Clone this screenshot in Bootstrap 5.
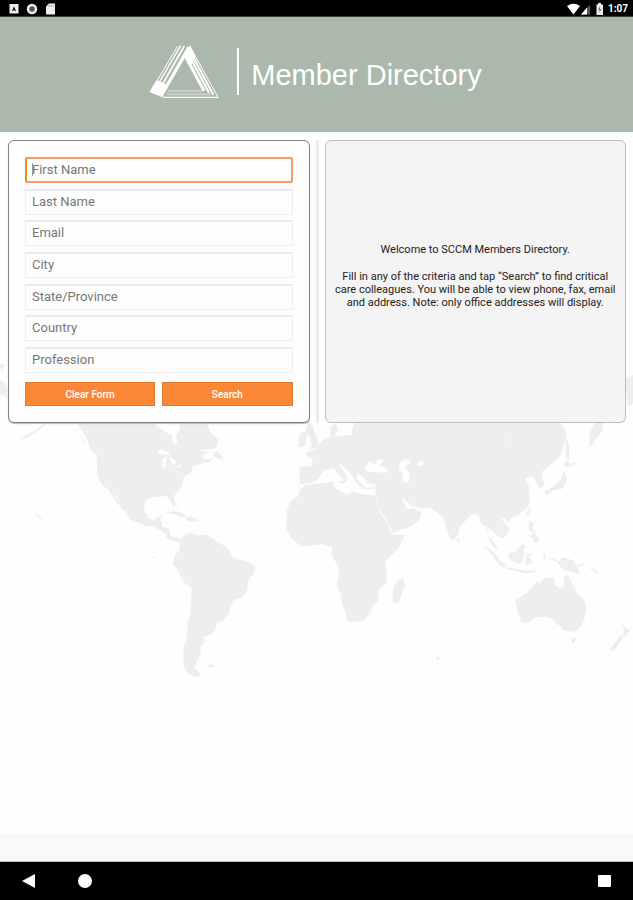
<!DOCTYPE html>
<html lang="en">
<head>
<meta charset="utf-8">
<meta name="viewport" content="width=device-width, initial-scale=1">
<title>Member Directory</title>
<link href="https://cdn.jsdelivr.net/npm/bootstrap@5.3.0/dist/css/bootstrap.min.css" rel="stylesheet">
<style>
body { font-family: Roboto, "Liberation Sans", sans-serif; background: #fefefe; color: #222; }
.status-bar { height: 17px; padding: 2px 5px 0 8px; font-size: 10px; line-height: 14px; background: #000; border-bottom: 1px solid #39423b; }
.brand-bar { min-height: 115px; background: #abb8ac; padding: 0 2px 6px 0; }
.brand-rule { width: 2px; height: 47px; background: #fff; margin: 0 12px 0 18px; }
.brand-title { font: 29px/34px "Liberation Sans", Arial, sans-serif; padding-top: 6px; }
.stage { display: grid; align-items: start; }
.stage > * { grid-area: 1 / 1; min-width: 0; }
.map-art { width: 100%; height: auto; fill: #eeeeee; }
.panels { display: grid; grid-template-columns: 1fr 3px 1fr; padding: 8px 7px 8px 8px; gap: 6px; z-index: 1; }
.panel { min-width: 0; border-radius: 6px; min-height: 283px; }
.form-panel { background: #fefefe; border: 1px solid #808080; padding: 16px; box-shadow: 0 1px 1px #bbb; }
.info-panel { background: #f4f4f4; border: 1px solid #bdbdbd; padding: 0 6px 12px; font-size: 11px; line-height: 13px; }
.info-panel p { margin-bottom: 14px; }
.info-panel p:last-child { margin-bottom: 0; }
.divider { background: #ecebeb; }
.fields { min-height: 216px; margin-bottom: 9px; }
.field { height: 26px; padding: 0 6px 2px; font-size: 13px; line-height: 20px; border: 1px solid #eee; border-top: 2px solid #ebebeb; border-radius: 0; background-color: #fefefe; box-shadow: none; }
.field::placeholder { color: #777; opacity: 1; }
.field.active { border: 2px solid #fb9c62; border-left-color: #f08a1d; border-radius: 2px; padding: 0 5px 2px; background: linear-gradient(#999, #999) 5px 4px / 1px 13px no-repeat #fefefe; }
.action { height: 24px; padding: 1px 0 0; font-size: 10px; font-weight: 500; line-height: 21px; color: #fff; background: #fb8736; border: 1px solid #e47a2b; border-radius: 0; }
.actions { gap: 7px; }
.tab-strip { height: 28px; background: #f8f8f8; border-bottom: 1px solid #bbb; }
.sys-nav { height: 38px; background: #000; padding: 0 18px; }
.sys-nav button { background: none; border: 0; padding: 0; line-height: 0; width: 20px; height: 20px; }
.sys-nav svg { fill: #fff; }
.home-key { margin-left: 37px; }
</style>
<script src="https://cdn.jsdelivr.net/npm/bootstrap@5.3.0/dist/js/bootstrap.bundle.min.js"></script>
</head>
<body class="d-flex flex-column min-vh-100">
<div class="status-bar d-flex justify-content-between align-items-center text-white">
  <svg width="48" height="13" viewBox="8 3 48 13" fill="#eee" aria-hidden="true">
    <path fill-rule="evenodd" d="M9.500 4h9v9.500h-9zM12 11h1l1-1.500 1 1.500h1L14 6.500z"/>
    <circle cx="32" cy="9" r="4" fill="#555" stroke="#eee" stroke-width="2.500"/>
    <path d="M49 3.500h6v11h-9V6.500z"/><path d="M49 5v2M51 5v2M53 5v2" stroke="#888" stroke-width=".7"/>
  </svg>
  <div class="d-flex align-items-center gap-1">
    <svg width="37" height="13" viewBox="567 3 37 13" fill="#fff" aria-hidden="true">
      <path d="M567 6q6.500-4.500 13 0l-6.500 8.500z"/>
      <path d="M581 14.500l9-10v10z" fill="#555"/><path d="M581 14.500l6-7v7z"/>
      <path d="M598 3h3v1.500h2v10.500h-6.500V4.500h1.500z" fill="#eee"/><path d="M600 6l-2 4h1.500v3l2-4H600z" fill="#777"/>
    </svg>
    <span class="fw-bold">1:07</span>
  </div>
</div>

<header class="brand-bar d-flex justify-content-center align-items-center text-white">
  <svg width="70" height="54" viewBox="27 27 210 162" role="img" aria-label="SCCM">
    <path d="M28 168L50 132l32 14-14 38z" fill="#fff"/>
    <path d="M150 28l18 34-14 24-22-22z" fill="#fff"/>
    <g stroke="#fff" fill="none">
      <path d="M43 148L113 30" stroke-width="3"/>
      <path d="M50 152L122 29" stroke-width="4"/>
      <path d="M60 158L133 30" stroke-width="5"/>
      <path d="M70 168L147 34" stroke-width="10"/>
      <path d="M149 30L233 182" stroke-width="3"/>
      <path d="M150 45L220 176" stroke-width="6"/>
      <path d="M144 52L207 170" stroke-width="6"/>
      <path d="M136 60L192 164" stroke-width="9"/>
    </g>
    <path d="M70 184h166" stroke="#fff" stroke-width="4"/>
    <path d="M80 175h134M84 165h106" stroke="#fff" stroke-width="6" opacity=".35"/>
  </svg>
  <span class="brand-rule"></span>
  <h1 class="brand-title mb-0">Member Directory</h1>
</header>

<main class="stage flex-grow-1">
  <svg class="map-art" viewBox="0 132 633 570" aria-hidden="true">
    <g transform="translate(0 360) scale(.3333)">
      <path d="M0 60l15 8 7 20v30L10 104 0 107zM0 12h12v14H0z"/>
      <path d="M228 185L246 212 262 240 275 275 290 282 292 345 305 372 330 395 345 420 370 452 375 452 350 415 340 400 350 408 368 440 390 478 440 498 455 497 495 520 500 535 530 546 540 548 540 535 512 530 507 505 488 500 482 480 488 462 462 480 445 475 433 455 434 425 450 412 500 408 512 420 520 440 526 440 522 408 545 380 552 350 575 335 578 318 600 312 632 305 640 290 630 299 610 298 608 283 630 276 594 272 650 265 655 240 630 215 620 185H540L538 210 528 228 532 250 520 252 515 225 495 215 480 205 458 190z"/>
      <path d="M645 293l24 4-3-10-16-14-12 12zM52 244l32-21 22-10 18-18 18-7-17 15-21 17-22 12zM245 227l14 25-5-3-10-16zM500 461l18-8 28 5 16 14-20-1-20-9zM558 474l16-5 25 14-36 2zM535 446l-10-14 12 9zM104 457l12 8 15 20-14-12zM625 914l20 1-8 6-12-1zM456 590h10v3h-10z"/>
      <path d="M540 548L545 535 565 520 575 518 585 526 622 524 635 535 658 550 680 560 692 585 710 598 745 605 765 620 763 638 745 660 742 690 730 708 700 722 692 735 688 760 665 785 650 788 645 812 628 825 612 830 615 845 602 862 602 885 590 905 585 925 605 945 585 952 565 940 550 918 550 865 560 840 563 795 570 765 575 685 550 665 530 625 518 612 526 585 538 570z"/>
      <g fill="#fefefe"><path d="M469 280l13-13 20 8 9 10-9 1-15-2zM487 322v-24l15-13-4 20-3 20zM505 291l14 6 11 9-8 7-6 1-3-13zM522 321l17-5 8-6-8 12z"/></g>
    </g>
    <g transform="translate(270 420) scale(.3333)">
      <path d="M105 195L190 185 195 205 232 225 245 215 275 222 315 225 318 245 335 285 355 318 366 345 405 345 385 385 345 425 350 450 352 485 325 510 325 540 308 560 300 580 278 603 232 606 228 580 215 550 212 520 200 500 208 460 205 440 185 405 187 382 178 382 160 372 95 380 65 355 48 330 50 270 65 240 82 230 90 212z"/>
      <path d="M90 192L88 142 125 138 128 118 108 105 112 95 140 85 160 60 175 50 245 45 248 20 255 5H870L890 40 885 60 878 90 865 115 830 145 820 150 815 165 822 195 812 208 800 190 795 175 783 168 765 175 770 190 778 200 780 250 765 270 735 290 710 290 695 298 717 325 715 340 700 355 685 350 665 330 655 325 655 345 678 375 685 395 668 378 655 350 650 320 635 312 625 285 605 282 570 320 565 345 545 362 530 330 520 292 505 280 485 265 452 265 425 258 400 235 395 238 412 268 430 264 455 280 448 300 420 320 370 338 345 295 320 248 328 195 290 190 280 170 262 160 260 175 272 188 288 204 312 202 312 208 280 207 262 192 245 165 215 135 205 128 232 170 232 182 222 192 195 183 222 182 190 145 165 150 140 180 120 190z"/>
      <path d="M316 190h14v50h-14z"/>
      <path d="M88 45l12-11 10 9-3 33-22 7zM114 0l13 16 10 29 9 15-1 22-36 8 15-13-3-24-15-17 6-19-6-16zM182 50V20l14-9 8 16-12 27zM958 85L960 33 979 5H999L998 30 984 50zM876 20L890 55 898 75 897 120 888 115 887 75zM881 140L887 121 904 132 926 122 904 140zM884 148L891 180 880 205 848 212 828 227 824 213 850 200 872 180zM768 280l15-24-4 26-7 7zM705 293l12-5 9 4-12 14zM777 302l14 6-3 22 14 8-15 0-12-16zM779 350l10-11 14 8 4 20-14 2-4-14zM560 347l13 23-10-4zM642 374L665 390 693 424 712 436 695 442 687 435 668 408zM694 440L732 446 772 453 804 449 788 459 758 458 715 448zM714 400l22-4 21-25 12 7-9 12 4 14-12 27-20-4-12-6zM771 402l20-5-15 12 13 19-20 7-4-8zM812 415l12-3-7-10 8-4 1 20zM835 413L852 416 864 425 878 412 908 421 925 445 930 465 905 455 880 450 862 428zM921 437l24-9-10 13zM955 442l17 4 20 15-12-2zM1017 485l8 10-6-2zM1004 516l14 14-8-4zM1076 498l8 10h-6z"/>
      <path d="M386 481l13-7 7 19-9 20-10 36-15 3-5-16 2-20 3-20z"/>
      <path d="M736 539l32-18 16-15 15-20 10 5 14-17 29-1 2 23 17 9 10-5 2-29 10-6 15 29 13 25 22 20 6 28-7 36-20 30-22 2-22-5-8-14-11-3-12-17-22-6-30 3-18 14-24 1-1-12-9-19zM904 652h16l-7 16-8-1zM1052 608L1065 622 1080 630 1066 650 1058 645 1062 630zM1053 645L1060 652 1045 672 1032 693 1017 691 1030 675z"/>
      <path d="M499 711h10l-2 9h-7z"/>
      <g fill="#fefefe"><path d="M284 151L296 123 314 134 326 118 342 120 329 134 352 149 352 158 322 157 300 155zM388 131L404 117 420 120 420 129 406 141 418 159 419 180 407 189 398 182 400 163 386 148zM442 130l12-9 8 11-14 9zM703 71l12-23-4 16zM210 28L228 5H248L232 22 225 38 205 42z"/></g>
    </g>
    <path d="M625 378l8-3v28l-5 4z"/>
  </svg>

  <div class="panels">
    <form class="panel form-panel" onsubmit="return false">
      <div class="fields d-flex flex-column justify-content-between">
        <input class="form-control field active" type="text" placeholder="First Name" aria-label="First Name">
        <input class="form-control field" type="text" placeholder="Last Name" aria-label="Last Name">
        <input class="form-control field" type="email" placeholder="Email" aria-label="Email">
        <input class="form-control field" type="text" placeholder="City" aria-label="City">
        <input class="form-control field" type="text" placeholder="State/Province" aria-label="State/Province">
        <input class="form-control field" type="text" placeholder="Country" aria-label="Country">
        <input class="form-control field" type="text" placeholder="Profession" aria-label="Profession">
      </div>
      <div class="actions d-flex">
        <button class="btn action flex-fill w-50" type="reset">Clear Form</button>
        <button class="btn action flex-fill w-50" type="submit">Search</button>
      </div>
    </form>
    <div class="divider"></div>
    <section class="panel info-panel d-flex flex-column justify-content-center text-center">
      <p>Welcome to SCCM Members Directory.</p>
      <p>Fill in any of the criteria and tap “Search” to find critical care colleagues. You will be able to view phone, fax, email and address. Note: only office addresses will display.</p>
    </section>
  </div>
</main>

<div class="tab-strip"></div>
<nav class="sys-nav d-flex align-items-center" aria-label="System">
  <button type="button" aria-label="Back"><svg width="20" height="20"><path d="M4 10L17 3v14z"/></svg></button>
  <button type="button" class="home-key me-auto" aria-label="Home"><svg width="20" height="20"><circle cx="10" cy="10" r="7"/></svg></button>
  <button type="button" aria-label="Recent apps"><svg width="20" height="20"><rect x="3" y="4" width="13" height="12" rx="1"/></svg></button>
</nav>
</body>
</html>
